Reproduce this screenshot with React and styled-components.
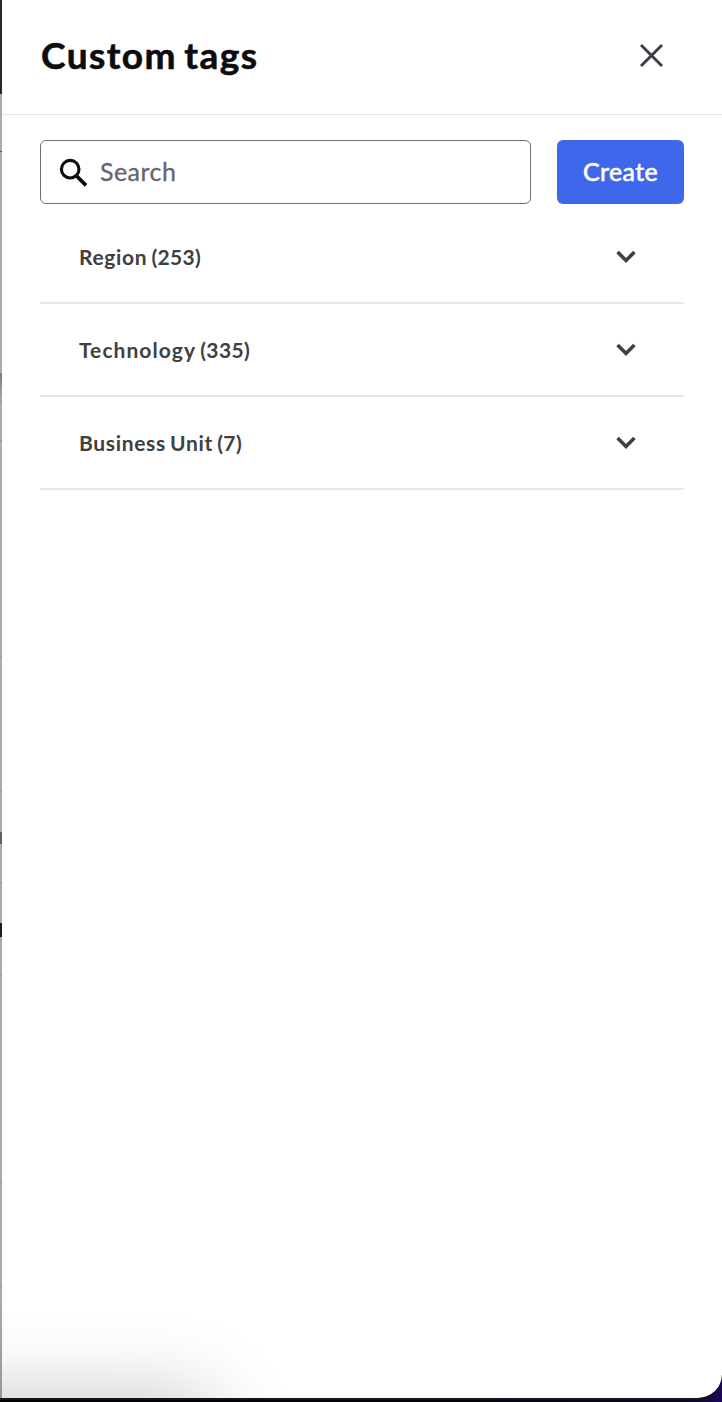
import React from "react";
import styled, { createGlobalStyle } from "styled-components";

const GlobalStyle = createGlobalStyle`
  *, *::before, *::after { box-sizing: border-box; }
  body { margin: 0; background: #0b0716; font-family: Lato, "Open Sans", sans-serif; }
  button, input { font-family: inherit; }
`;

const Desktop = styled.div`
  height: 1402px;
  padding-bottom: 2px;
  overflow: hidden;
  background: linear-gradient(90deg, #020105 0%, #05020d 60%, #0c0524 94%, #1d0857 100%);
`;

const Window = styled.div`
  display: flex;
  height: 1400px;
  border-bottom: 2px solid #101612;
  border-bottom-right-radius: 25px;
  overflow: hidden;
  background: #101612;
`;

const Backdrop = styled.div`
  flex: none;
  width: 2px;
  display: flex;
  flex-direction: column;
  background: linear-gradient(#adadad 0, #a9a9a9 93%, #969696 100%);
`;

const Mark = styled.div`
  flex: none;
  height: ${(p) => p.$size}px;
  margin-top: ${(p) => p.$gap || 0}px;
  background: ${(p) => p.$color};
`;

const Drawer = styled.section`
  flex: 1;
  display: flex;
  flex-direction: column;
  overflow: hidden;
  border-bottom-right-radius: 23px;
  background: #fff;
`;

const DockShadow = styled.div`
  flex: none;
  width: 308px;
  height: 200px;
  margin: auto 0 -200px -100px;
  box-shadow: 0 0 84px rgba(0, 0, 0, 0.24);
`;

const Header = styled.header`
  display: flex;
  align-items: center;
  justify-content: space-between;
  height: 115px;
  padding: 0 58px 4px 39px;
  border-bottom: 1px solid #e5e5ec;
`;

const Title = styled.h1`
  margin: 0;
  padding-bottom: 1px;
  font-size: 37px;
  line-height: 44px;
  font-weight: 700;
  letter-spacing: 1.45px;
  word-spacing: -3px;
  color: #0c0c0e;
  -webkit-text-stroke: 0.6px #0c0c0e;
`;

const CloseButton = styled.button`
  display: flex;
  padding: 0;
  border: 0;
  background: none;
  color: #3c3c44;
`;

const Toolbar = styled.div`
  display: flex;
  gap: 26px;
  padding: 25px 38px 0;
`;

const SearchField = styled.label`
  flex: 1;
  display: flex;
  align-items: center;
  gap: 12px;
  height: 64px;
  padding: 0 18px;
  border: 1px solid #6e6e7a;
  border-radius: 6px;
  background: #fff;
`;

const SearchText = styled.span`
  padding-bottom: 2px;
  font-size: 25px;
  line-height: 32px;
  letter-spacing: 0.45px;
  color: #646470;
  -webkit-text-stroke: 0.3px #646470;
`;

const CreateButton = styled.button`
  width: 127px;
  height: 64px;
  padding: 0 0 2px;
  border: 0;
  border-radius: 6px;
  background: #3e67eb;
  color: #fff;
  font-size: 25px;
  line-height: 32px;
  letter-spacing: 0.4px;
  -webkit-text-stroke: 0.6px #fff;
`;

const TagList = styled.ul`
  margin: 7px 38px 0;
  padding: 0;
  list-style: none;
`;

const TagRow = styled.li`
  display: flex;
  align-items: center;
  justify-content: space-between;
  height: 93px;
  padding: 0 48px 0 39px;
  border-bottom: 2px solid #e6e6e6;
  color: #404040;
`;

const TagName = styled.span`
  font-size: 21px;
  line-height: 28px;
  font-weight: 700;
  letter-spacing: ${(p) => p.$tracking}px;
  word-spacing: -1.5px;
`;

const TagCount = styled.span`
  letter-spacing: ${(p) => p.$tracking}px;
`;

const tags = [
  { name: "Region", count: 253, tracking: 0.65, countTracking: 0.3 },
  { name: "Technology", count: 335, tracking: 1.05, countTracking: 0.4 },
  { name: "Business Unit", count: 7, tracking: 0.65, countTracking: 0.4 },
];

const marks = [
  { size: 94, color: "#28282a" },
  { gap: 57, size: 1, color: "#58585c" },
  { gap: 221, size: 28, color: "linear-gradient(#7c7c7c, #a9a9a9)" },
  { size: 1, color: "#8f8f8f" },
  { gap: 38, size: 1, color: "#929292" },
  { gap: 89, size: 1, color: "#989898" },
  { gap: 125, size: 1, color: "#989898" },
  { gap: 134, size: 1, color: "#989898" },
  { gap: 40, size: 12, color: "#626066" },
  { gap: 38, size: 2, color: "#999" },
  { gap: 39, size: 14, color: "#1d1b22" },
  { gap: 38, size: 1, color: "#999" },
  { gap: 206, size: 1, color: "#929292" },
  { gap: 103, size: 1, color: "#929292" },
];

const Chevron = () => (
  <svg width="20" height="14" viewBox="0 0 20 14" fill="none" stroke="currentColor" strokeWidth="3.6">
    <path d="M1.6 2.1 10 10.5 18.4 2.1" />
  </svg>
);

export default function App() {
  return (
    <Desktop>
      <GlobalStyle />
      <Window>
        <Backdrop>
          {marks.map((m, i) => (
            <Mark key={i} $gap={m.gap} $size={m.size} $color={m.color} />
          ))}
        </Backdrop>
        <Drawer>
          <Header>
            <Title>Custom tags</Title>
            <CloseButton aria-label="Close">
              <svg width="25" height="25" viewBox="0 0 25 25" fill="none" stroke="currentColor" strokeWidth="2.9">
                <path d="M2 2 23 23M23 2 2 23" />
              </svg>
            </CloseButton>
          </Header>
          <Toolbar>
            <SearchField>
              <svg width="29" height="30" viewBox="0 0 29 30" fill="none" stroke="#0c0c0e">
                <circle cx="11.2" cy="12.2" r="8.8" strokeWidth="3.1" />
                <path d="M17.6 19 27 28.4" strokeWidth="3.7" />
              </svg>
              <SearchText>Search</SearchText>
            </SearchField>
            <CreateButton>Create</CreateButton>
          </Toolbar>
          <TagList>
            {tags.map((t) => (
              <TagRow key={t.name}>
                <TagName $tracking={t.tracking}>
                  {t.name} <TagCount $tracking={t.countTracking}>({t.count})</TagCount>
                </TagName>
                <Chevron />
              </TagRow>
            ))}
          </TagList>
          <DockShadow />
        </Drawer>
      </Window>
    </Desktop>
  );
}
